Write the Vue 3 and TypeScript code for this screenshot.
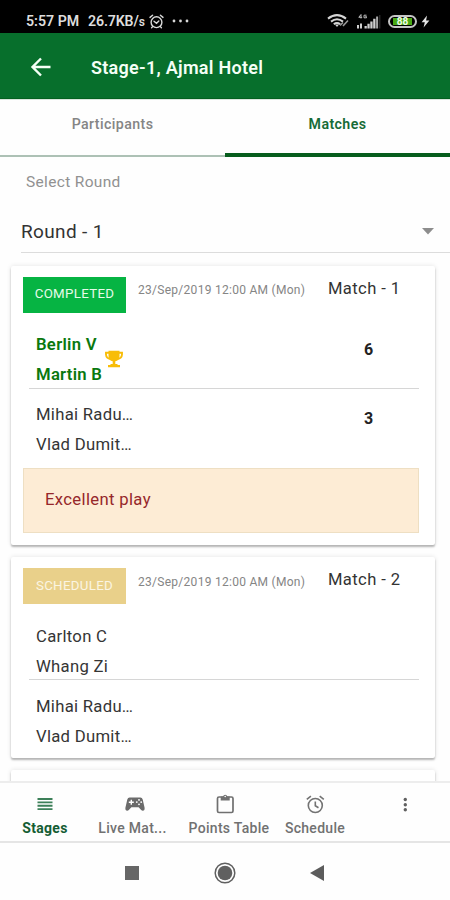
<script setup lang="ts">
interface Team {
  players: string[]
  score?: number
  winner?: boolean
}

interface Match {
  id: number
  status: 'completed' | 'scheduled'
  date: string
  teams: Team[]
  comment?: string
}

const matches: Match[] = [
  {
    id: 1,
    status: 'completed',
    date: '23/Sep/2019 12:00 AM (Mon)',
    teams: [
      { players: ['Berlin V', 'Martin B'], score: 6, winner: true },
      { players: ['Mihai Radu…', 'Vlad Dumit…'], score: 3 },
    ],
    comment: 'Excellent play',
  },
  {
    id: 2,
    status: 'scheduled',
    date: '23/Sep/2019 12:00 AM (Mon)',
    teams: [
      { players: ['Carlton C', 'Whang Zi'] },
      { players: ['Mihai Radu…', 'Vlad Dumit…'] },
    ],
  },
]
</script>

<template>
  <div class="screen">
    <header class="status">
      <span class="clock">5:57 PM</span>
      <span class="speed">26.7KB/<small>s</small></span>
      <svg class="alarm" width="15" height="15" viewBox="0 0 15 15" fill="none" stroke="#d8d8d8" stroke-width="1.4" stroke-linecap="round">
        <circle cx="7.5" cy="8.2" r="5.4" />
        <path d="M1 3.4 3.6 1.2M14 3.4 11.4 1.2M5 7.2l2.5 2 2.3-2.2M3.6 12.6l-1 1.2M11.4 12.6l1 1.2" />
      </svg>
      <svg class="more" width="17" height="4" viewBox="0 0 17 4" fill="#d8d8d8">
        <circle cx="2" cy="2" r="1.4" /><circle cx="8.5" cy="2" r="1.4" /><circle cx="15" cy="2" r="1.4" />
      </svg>
      <span class="grow"></span>
      <svg class="wifi" width="22" height="14" viewBox="0 0 22 14" fill="none" stroke="#d5d5d5" stroke-width="2">
        <path d="M1 4.600Q10 -2.400 19 4.600M4 7.600Q10 2.800 16 7.600M6.800 10.200Q10 7.700 13.200 10.200" />
        <path d="M8 10.500h4l-2 2.500z" fill="#d5d5d5" stroke="none" />
        <path d="M13 11.500l3-3M16 12l5-5.500" stroke-width="1.600" stroke="#999" />
      </svg>
      <svg class="signal" width="24" height="15" viewBox="0 0 24 15" fill="#cfcfcf">
        <path d="M0 11h2v3.500H0zM3 9.500h2v5H3zM7.500 12h2.300v2.500H7.500zM10.400 9.800h2.300v4.700h-2.300zM13.300 7.400h2.300v7.100h-2.300zM16.200 4.800h2.300v9.700h-2.300z" />
        <path d="M19.100 2.500h2v12h-2z" fill="#aaa" />
        <path d="M22.300 1h1v13.500h-1z" fill="#3a3a3a" />
        <path d="M4 .5 1.800 3.300h3.400M4 .5v4M9.500 1.200H7v2.600h2.500V2.600H8.300" fill="none" stroke="#bbb" />
      </svg>
      <span class="battery"><span class="charge">88</span></span>
      <svg class="bolt" width="9" height="13" viewBox="0 0 9 13" fill="#e6e6e6"><path d="M6 .5.600 7.200h3.200L2.600 12.500 8.400 5.600H5.100z" /></svg>
    </header>

    <div class="appbar">
      <svg width="22" height="20" viewBox="0 0 22 20" fill="none" stroke="#f4fff6" stroke-width="2.400"><path d="M20.500 10H2.500M11 1.500 2.500 10l8.500 8.500" /></svg>
      <h1>Stage-1, Ajmal Hotel</h1>
    </div>

    <nav class="tabs">
      <a class="tab">Participants</a>
      <a class="tab active">Matches</a>
    </nav>

    <main class="content">
      <label class="label">Select Round</label>
      <div class="select">
        <span>Round - 1</span>
        <svg width="12" height="7" viewBox="0 0 12 7"><path d="M0 0h12L6 6.500z" fill="#8d8d8d" /></svg>
      </div>

      <section v-for="match in matches" :key="match.id" class="card" :class="'is-' + match.status">
        <div class="head">
          <span class="badge">{{ match.status.toUpperCase() }}</span>
          <span class="date">{{ match.date }}</span>
          <span class="number">Match - {{ match.id }}</span>
        </div>
        <div v-for="(team, i) in match.teams" :key="i" class="team" :class="{ winner: team.winner }">
          <div class="players">
            <span v-for="player in team.players" :key="player">{{ player }}</span>
          </div>
          <svg v-if="team.winner" class="trophy" width="18" height="18" viewBox="0 0 18 18">
            <path d="M4.500 2.800H1v1.700q.3 4 4.500 4.500M13.500 2.800H17v1.700q-.3 4-4.500 4.500" fill="none" stroke="#f8bd08" stroke-width="1.900" />
            <path d="M3.500.8h11v5.500q-.3 4.300-4.200 5v2.800h2.200v.8H15v2.300H3v-2.300h2.500v-.8h2.200v-2.800Q3.800 10.600 3.500 6.300z" fill="#f8bd08" />
          </svg>
          <strong v-if="team.score !== undefined" class="score">{{ team.score }}</strong>
        </div>
        <p v-if="match.comment" class="comment">{{ match.comment }}</p>
      </section>
      <section class="card"></section>
    </main>

    <nav class="bottom">
      <a class="item active">
        <svg width="16" height="20" viewBox="0 0 16 20" fill="#3d8059"><path d="M.5 4h15v1.900H.5zM.5 7.400h15v1.900H.5zM.5 10.800h15v1.900H.5zM.5 14.200h15v1.900H.5z" /></svg>
        <span>Stages</span>
      </a>
      <a class="item">
        <svg width="20" height="20" viewBox="0 0 20 20">
          <path d="M4.600 3.500h10.800q1.800 0 2.300 2l1.900 8.300q.3 2.900-1.800 2.900-.9 0-1.600-.8l-2.600-2.700H6.400l-2.600 2.700q-.7.800-1.600.8-2.100 0-1.800-2.900L2.300 5.500q.5-2 2.300-2z" fill="#6b6b6b" />
          <path d="M6.300 5.700v5M3.800 8.200h5" stroke="#fff" stroke-width="1.400" />
          <g fill="#fff"><circle cx="14" cy="5.900" r=".9" /><circle cx="14" cy="10.300" r=".9" /><circle cx="11.800" cy="8.100" r=".9" /><circle cx="16.200" cy="8.100" r=".9" /></g>
        </svg>
        <span class="live">Live Mat...</span>
      </a>
      <a class="item">
        <svg width="20" height="20" viewBox="0 0 20 20">
          <rect x="2.500" y="3" width="15.500" height="15.500" rx="1.500" fill="none" stroke="#707070" stroke-width="1.700" />
          <path d="M5.700 2.500h2.300a2.300 2.300 0 0 1 4.400 0h2.300V6.500h-9z" fill="#707070" /><circle cx="10.200" cy="2.500" r=".8" fill="#fff" />
        </svg>
        <span class="wide">Points Table</span>
      </a>
      <a class="item">
        <svg width="20" height="20" viewBox="0 0 20 20" fill="none" stroke="#737373" stroke-width="1.600">
          <circle cx="10.300" cy="11.500" r="7" /><path d="M1.800 5.400 5.900 2.100M18.800 5.400 14.700 2.100M10.300 7.500v4.300l3.200 2" />
        </svg>
        <span>Schedule</span>
      </a>
      <a class="item">
        <svg width="20" height="20" viewBox="0 0 20 20" fill="#606060"><circle cx="10.300" cy="5.500" r="1.700" /><circle cx="10.300" cy="10.700" r="1.700" /><circle cx="10.300" cy="15.800" r="1.700" /></svg>
      </a>
    </nav>

    <footer class="system">
      <svg width="14" height="14" viewBox="0 0 14 14"><path d="M0 0h14v14H0z" fill="#666" /></svg>
      <svg width="22" height="22" viewBox="0 0 22 22"><circle cx="11" cy="11" r="9.800" fill="none" stroke="#606060" stroke-width="1.500" /><circle cx="11" cy="11" r="7.300" fill="#606060" /></svg>
      <svg width="14" height="16" viewBox="0 0 14 16"><path d="M14 0v16L0 8z" fill="#5c5c5c" /></svg>
    </footer>
  </div>
</template>

<style>
body { background: #fefefe; overflow: hidden; }
</style>

<style scoped>
* { box-sizing: border-box; }
.screen { width: 450px; height: 900px; display: flex; flex-direction: column; overflow: hidden; font-family: Roboto, sans-serif; background: #fefefe; color: #333; white-space: nowrap; }

.status { height: 33px; flex: none; background: #000; color: #ddd; display: flex; align-items: center; padding: 9px 20px 0 26px; font-size: 14.200px; font-weight: 600; }
.clock { width: 62px; letter-spacing: 0; }
.speed { width: 60px; letter-spacing: -.15px; }
.speed small { font-size: 12px; }
.alarm { margin-left: 1px; }
.more { margin-left: 8px; margin-top: -1px; }
.grow { flex: 1; }
.signal { margin-left: 8px; }
.battery { width: 29px; height: 13px; margin-left: 7px; border: 2px solid #c5c5c5; border-radius: 7px; padding: 1px 3px; display: flex; }
.charge { flex: 1; background: #48a813; color: #f0ffe8; font-size: 10px; font-weight: 700; line-height: 8px; text-align: center; }
.bolt { margin-left: 4px; }

.appbar { height: 66px; flex: none; display: flex; align-items: center; gap: 39px; padding: 2px 0 0 30px; background: #076f2c; color: #f4fff6; border-bottom: 1px solid #03601f; }
h1 { margin: 0; padding-top: 2px; font-size: 18px; font-weight: 600; letter-spacing: .28px; }

.tabs { height: 58px; flex: none; display: flex; border-top: 1px solid #d8e6dc; }
.tab { flex: 1; display: flex; justify-content: center; align-items: flex-start; padding-top: 16px; font-size: 14.200px; line-height: 17px; font-weight: 500; letter-spacing: .4px; color: #858585; border-bottom: 2px solid #adc1b5; }
.tab.active { color: #176b37; font-weight: 600; border-bottom: 4px solid #075d1d; }

.content { flex: 1; min-height: 0; overflow: hidden; }
.label { display: block; padding: 15px 0 0 26px; font-size: 15.500px; line-height: 20px; letter-spacing: .33px; color: #919191; }
.select { margin: 20px 0 0 21px; height: 41px; display: flex; justify-content: space-between; align-items: center; padding: 0 16px 1px 0; border-bottom: 1px solid #dcdcdc; font-size: 19px; letter-spacing: .35px; color: #333; }

.card { width: 424px; margin: 13px 0 0 11px; padding: 11px 16px 11px 12px; min-height: 40px; background: #fff; border-radius: 2px; box-shadow: 0 2px 2px rgba(0, 0, 0, .26), 0 0 5px rgba(0, 0, 0, .11); }
.card + .card { margin-top: 12px; }
.is-completed { height: 279px; }
.is-scheduled { height: 201px; }
.head { display: flex; height: 53px; align-items: flex-start; }
.badge { width: 103px; height: 36px; flex: none; display: flex; align-items: center; justify-content: center; padding-bottom: 3px; color: #e6fbe9; font-size: 13.300px; letter-spacing: .3px; }
.is-completed .badge { background: #06b443; }
.is-scheduled .badge { background: #e9d08a; color: #fbf5e2; padding-bottom: 2px; }
.date { width: 202px; flex: none; padding: 6px 0 0 12px; font-size: 12px; line-height: 14px; letter-spacing: .28px; color: #858585; }
.number { padding-top: 1px; font-size: 16.600px; line-height: 22px; letter-spacing: .38px; color: #333; }
.is-scheduled .date { padding-top: 7px; }
.team { display: flex; margin-left: 6px; padding-left: 7px; color: #353535; }
.team:nth-child(2) { height: 59px; border-bottom: 1px solid #d6d6d6; }
.team:nth-child(3) { height: 79px; padding-top: 11px; }
.is-scheduled .team:nth-child(2) { padding-top: 1px; }
.is-scheduled .team:nth-child(3) { padding-top: 12px; }
.players { display: flex; flex-direction: column; font-size: 16.700px; line-height: 29.500px; letter-spacing: .28px; width: 69px; }
.winner .players { font-weight: 600; color: #0a780e; }
.trophy { margin-top: 20px; }
.score { margin: 1px 0 0 259px; font-size: 16px; line-height: 29px; color: #222; font-weight: 700; }
.trophy + .score { margin: 5px 0 0 241px; }
.team:nth-child(3) .score { margin-top: 4px; }
.comment { margin: 0; height: 65px; display: flex; align-items: center; padding: 0 0 2px 21px; border: 1px solid #eedfc3; background: #fdecd5; color: #96272a; font-size: 16.700px; letter-spacing: .33px; }

.bottom { height: 62px; flex: none; display: grid; grid-template-columns: repeat(5, 90px); background: #fefefe; border-top: 2px solid #ededed; border-bottom: 2px solid #e5e5e5; }
.item { display: flex; flex-direction: column; align-items: center; padding-top: 11px; gap: 6px; color: #717171; font-size: 14px; line-height: 16px; font-weight: 500; letter-spacing: .3px; }
.item.active { color: #155d34; font-weight: 700; }
.wide { margin-left: 8px; }
.live { margin-right: 5px; }
.system { height: 57px; flex: none; display: flex; align-items: center; justify-content: space-between; padding: 2px 126px 0 125px; background: #fefefe; }
</style>
